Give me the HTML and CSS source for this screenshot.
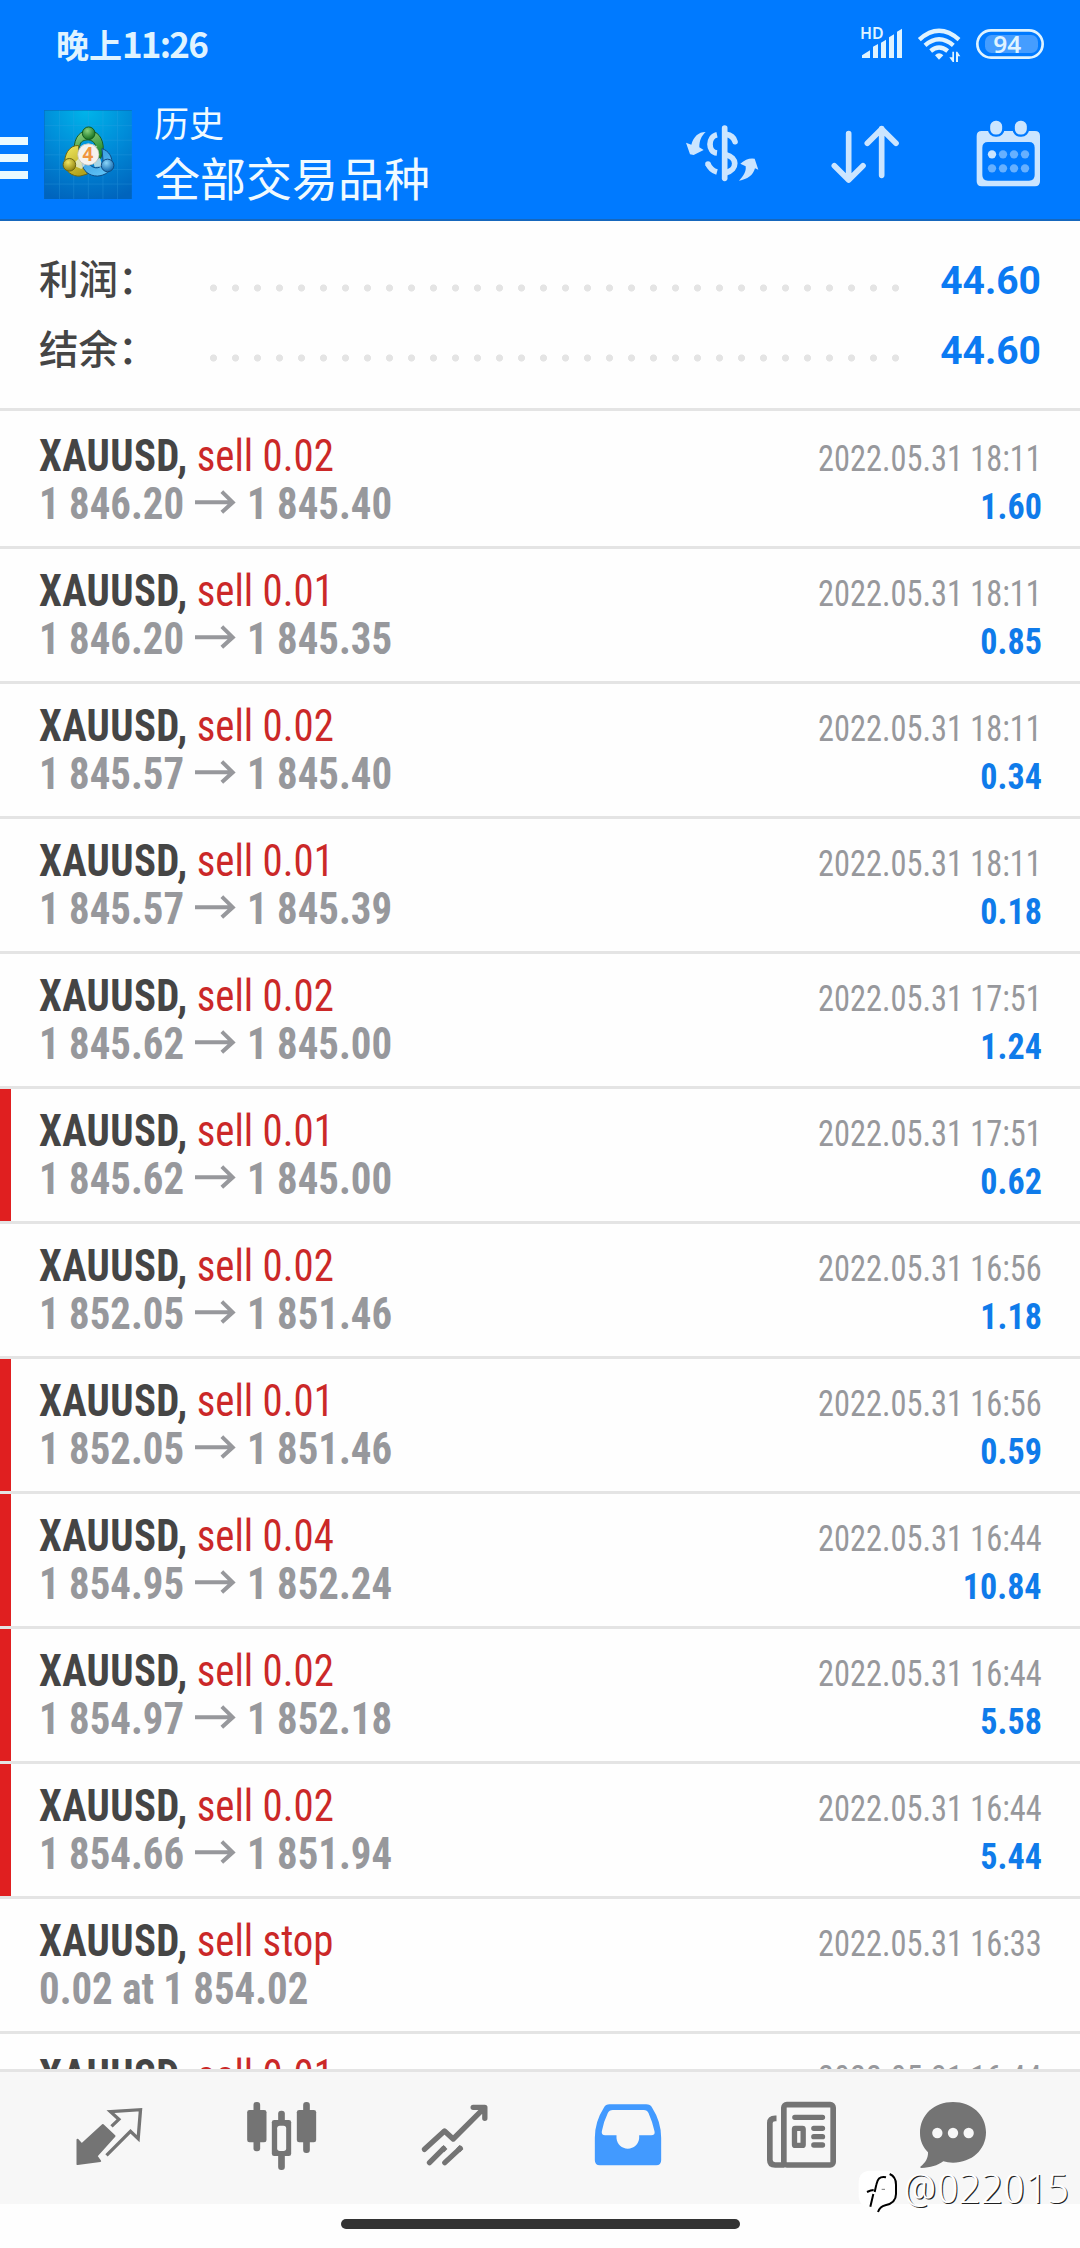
FILE: index.html
```html
<!DOCTYPE html>
<html lang="zh-CN">
<head>
<meta charset="utf-8">
<title>历史</title>
<link rel="stylesheet" href="styles.css">
</head>
<body>
<div class="screen">
  <header class="header">
    <div class="status">
      <div class="clock">晚上<span class="clock-digits">11:26</span></div>
      <svg class="status-icons" viewBox="660 78 555 114" fill="#dff3ff">
        <text x="660" y="117" font-family="Noto Sans" font-weight="600" font-size="46" textLength="71" lengthAdjust="spacingAndGlyphs">HD</text>
        <path d="M666 174v-8l24-15v23zM699 174v-34l15-8v42zM723 174v-46l15-9v55zM747 174v-62l15-9v71zM771 174v-79l15-9v88z"/>
        <g fill="none" stroke="#dff3ff" stroke-width="13">
          <path d="M838 119Q897 66 957 119"/><path d="M855 136Q897 99 940 136"/><path d="M872 153Q897 132 923 153"/>
        </g>
        <path d="M885 166q12-13 25 0l-13 13z"/>
        <path d="M937 155h5v31h-4l-10-14h9zM948 155h4l9 14h-7v17h-6z"/>
        <rect x="1035" y="105" width="159" height="54" rx="20" fill="#459dff"/>
        <rect x="1012" y="91" width="196" height="82" rx="41" fill="none" stroke="#dff3ff" stroke-width="8"/>
        <text x="1060" y="158" font-family="Noto Sans" font-weight="600" font-size="68" textLength="84" lengthAdjust="spacingAndGlyphs">94</text>
      </svg>
    </div>
    <div class="toolbar">
      <div class="menu"><i></i><i></i><i></i></div>
      <svg class="logo" viewBox="42 30 264 268">
        <defs>
          <radialGradient id="sky" cx=".48" cy="0" r="1.05"><stop offset="0" stop-color="#00b5ea"/><stop offset=".5" stop-color="#008bd8"/><stop offset="1" stop-color="#0064bd"/></radialGradient>
          <linearGradient id="green" x2=".4" y2="1"><stop offset="0" stop-color="#9ed98a"/><stop offset="1" stop-color="#1f8a2c"/></linearGradient>
          <linearGradient id="yellow" x2=".5" y2="1"><stop offset="0" stop-color="#f3ea62"/><stop offset="1" stop-color="#b3a41e"/></linearGradient>
          <linearGradient id="blue" x2=".5" y2="1"><stop offset="0" stop-color="#2b8ed6"/><stop offset="1" stop-color="#5cc0f5"/></linearGradient>
          <radialGradient id="gball" cx=".4" cy=".3" r=".7"><stop offset="0" stop-color="#8ad37e"/><stop offset="1" stop-color="#14701f"/></radialGradient>
          <radialGradient id="yball" cx=".4" cy=".3" r=".7"><stop offset="0" stop-color="#f0e560"/><stop offset="1" stop-color="#8f8212"/></radialGradient>
          <radialGradient id="bball" cx=".4" cy=".3" r=".7"><stop offset="0" stop-color="#8bd6fa"/><stop offset="1" stop-color="#1268ae"/></radialGradient>
        </defs>
        <rect x="42" y="30" width="264" height="268" fill="url(#sky)"/>
        <path d="M88 30v268M131 30v268M175 30v268M219 30v268M263 30v268M42 77h264M42 121h264M42 165h264M42 209h264M42 253h264" stroke="#3aa6e6" stroke-width="2" opacity=".4"/>
        <path d="M42 298V31h264" fill="none" stroke="#0a63b4" stroke-width="2"/>
        <path d="M132 150c0-40 20-58 44-58s46 20 44 60l-8 24-16-6c10-30-4-50-22-50s-26 10-24 20z" fill="url(#green)" stroke="#1a5c26" stroke-width="3"/>
        <path d="M146 137c-30-2-44 30-42 54 0 24 24 40 46 38l22-6-26-62z" fill="url(#yellow)" stroke="#6b6512" stroke-width="3"/>
        <path d="M216 146c22 8 32 26 30 48 0 20-22 34-44 35-24 0-44-16-46-38l24 4c12 14 34 12 40-6z" fill="url(#blue)" stroke="#104c84" stroke-width="3"/>
        <path d="M150 140q24-18 52 0l-26 20zM134 188l14-14 18 20-12 14-22-10zM190 188l20-14 8 26-24 2z" fill="#e9f6ee" opacity=".7"/>
        <circle cx="176" cy="100" r="19" fill="url(#gball)" stroke="#145a1e" stroke-width="3"/>
        <circle cx="118" cy="195" r="19" fill="url(#yball)" stroke="#6b6512" stroke-width="3"/>
        <circle cx="233" cy="197" r="19" fill="url(#bball)" stroke="#104c84" stroke-width="3"/>
        <circle cx="175" cy="164" r="32" fill="#f5f2ee" stroke="#b9b9ae" stroke-width="2"/>
        <text x="174" y="184" text-anchor="middle" font-family="Noto Sans" font-weight="700" font-size="57" fill="#f0953f">4</text>
      </svg>
      <div class="titles">
        <div class="title-small">历史</div>
        <div class="title-large">全部交易品种</div>
      </div>
      <div class="actions">
        <svg class="act-currency" viewBox="132 360 228 204" fill="#cbe5ff">
          <path d="M197 396c-22 0-36 14-43 38l-16-6 12 35 11 2 30-15-13-8c0-20 6-34 19-46z"/>
          <path d="M297 542c26-4 42-16 48-37l10 4-11-33q-22-4-43 15l16 8c2 16-6 28-20 43z"/>
          <path d="M254 384v151" stroke="#cbe5ff" stroke-width="17" stroke-linecap="round"/>
          <g fill="none" stroke="#cbe5ff" stroke-width="17">
            <path d="M231 404c-28 6-28 52 0 55"/><path d="M231 516q-19-5-27-24"/><path d="M204 492v.1" stroke-linecap="round"/>
            <path d="M258 403c16 2 24 10 27 22" stroke-linecap="round"/>
            <path d="M258 464c34 8 36 44 0 54"/>
          </g>
        </svg>
        <svg class="act-sort" viewBox="570 360 210 204" fill="none" stroke="#cbe5ff" stroke-width="17" stroke-linecap="round" stroke-linejoin="round">
          <path d="M626 401v138M583 497l43 43 43-43M725 526V386M682 430l43-43 43 43"/>
        </svg>
        <svg class="act-calendar" viewBox="1005 360 201 204">
          <path fill="#cbe5ff" fill-rule="evenodd" d="M1025 393h160q15 0 15 15v136q0 15-15 15h-160q-15 0-15-15V408q0-15 15-15zM1044 426q-17 0-17 17v82q0 17 17 17h123q17 0 17-17v-82q0-17-17-17z"/>
          <rect x="1047" y="359" width="43" height="48" rx="20" fill="#cbe5ff" stroke="#007aff" stroke-width="7"/>
          <rect x="1121" y="359" width="43" height="48" rx="20" fill="#cbe5ff" stroke="#007aff" stroke-width="7"/>
          <g fill="#66b0ff">
            <circle cx="1056" cy="463" r="12.500" fill="#cbe5ff"/><circle cx="1089" cy="463" r="12.500"/><circle cx="1122" cy="463" r="12.500"/><circle cx="1155" cy="463" r="12.500"/>
            <circle cx="1056" cy="505" r="12.500"/><circle cx="1089" cy="505" r="12.500"/><circle cx="1122" cy="505" r="12.500"/><circle cx="1155" cy="505" r="12.500"/>
          </g>
        </svg>
      </div>
    </div>
  </header>

  <section class="summary">
    <div class="sum-row"><span class="sum-label">利润：</span><span class="dots"></span><span class="sum-value">44.60</span></div>
    <div class="sum-row"><span class="sum-label">结余：</span><span class="dots"></span><span class="sum-value">44.60</span></div>
  </section>

  <svg class="defs" width="0" height="0"><symbol id="arrow" viewBox="0 0 126 72" preserveAspectRatio="none"><path d="M0 37h112M81 5l33 32-33 30" fill="none" stroke="#97989c" stroke-width="12"/></symbol></svg>

  <main class="list">
    <div class="deal">
      <div class="line"><div class="left"><b class="sym">XAUUSD,</b><span class="side">sell 0.02</span></div><span class="time">2022.05.31 18:11</span></div>
      <div class="line"><div class="left price"><b>1 846.20</b><svg class="arrow"><use href="#arrow"/></svg><b>1 845.40</b></div><b class="profit">1.60</b></div>
    </div>
    <div class="deal">
      <div class="line"><div class="left"><b class="sym">XAUUSD,</b><span class="side">sell 0.01</span></div><span class="time">2022.05.31 18:11</span></div>
      <div class="line"><div class="left price"><b>1 846.20</b><svg class="arrow"><use href="#arrow"/></svg><b>1 845.35</b></div><b class="profit">0.85</b></div>
    </div>
    <div class="deal">
      <div class="line"><div class="left"><b class="sym">XAUUSD,</b><span class="side">sell 0.02</span></div><span class="time">2022.05.31 18:11</span></div>
      <div class="line"><div class="left price"><b>1 845.57</b><svg class="arrow"><use href="#arrow"/></svg><b>1 845.40</b></div><b class="profit">0.34</b></div>
    </div>
    <div class="deal">
      <div class="line"><div class="left"><b class="sym">XAUUSD,</b><span class="side">sell 0.01</span></div><span class="time">2022.05.31 18:11</span></div>
      <div class="line"><div class="left price"><b>1 845.57</b><svg class="arrow"><use href="#arrow"/></svg><b>1 845.39</b></div><b class="profit">0.18</b></div>
    </div>
    <div class="deal">
      <div class="line"><div class="left"><b class="sym">XAUUSD,</b><span class="side">sell 0.02</span></div><span class="time">2022.05.31 17:51</span></div>
      <div class="line"><div class="left price"><b>1 845.62</b><svg class="arrow"><use href="#arrow"/></svg><b>1 845.00</b></div><b class="profit">1.24</b></div>
    </div>
    <div class="deal marked">
      <div class="line"><div class="left"><b class="sym">XAUUSD,</b><span class="side">sell 0.01</span></div><span class="time">2022.05.31 17:51</span></div>
      <div class="line"><div class="left price"><b>1 845.62</b><svg class="arrow"><use href="#arrow"/></svg><b>1 845.00</b></div><b class="profit">0.62</b></div>
    </div>
    <div class="deal">
      <div class="line"><div class="left"><b class="sym">XAUUSD,</b><span class="side">sell 0.02</span></div><span class="time">2022.05.31 16:56</span></div>
      <div class="line"><div class="left price"><b>1 852.05</b><svg class="arrow"><use href="#arrow"/></svg><b>1 851.46</b></div><b class="profit">1.18</b></div>
    </div>
    <div class="deal marked">
      <div class="line"><div class="left"><b class="sym">XAUUSD,</b><span class="side">sell 0.01</span></div><span class="time">2022.05.31 16:56</span></div>
      <div class="line"><div class="left price"><b>1 852.05</b><svg class="arrow"><use href="#arrow"/></svg><b>1 851.46</b></div><b class="profit">0.59</b></div>
    </div>
    <div class="deal marked">
      <div class="line"><div class="left"><b class="sym">XAUUSD,</b><span class="side">sell 0.04</span></div><span class="time">2022.05.31 16:44</span></div>
      <div class="line"><div class="left price"><b>1 854.95</b><svg class="arrow"><use href="#arrow"/></svg><b>1 852.24</b></div><b class="profit">10.84</b></div>
    </div>
    <div class="deal marked">
      <div class="line"><div class="left"><b class="sym">XAUUSD,</b><span class="side">sell 0.02</span></div><span class="time">2022.05.31 16:44</span></div>
      <div class="line"><div class="left price"><b>1 854.97</b><svg class="arrow"><use href="#arrow"/></svg><b>1 852.18</b></div><b class="profit">5.58</b></div>
    </div>
    <div class="deal marked">
      <div class="line"><div class="left"><b class="sym">XAUUSD,</b><span class="side">sell 0.02</span></div><span class="time">2022.05.31 16:44</span></div>
      <div class="line"><div class="left price"><b>1 854.66</b><svg class="arrow"><use href="#arrow"/></svg><b>1 851.94</b></div><b class="profit">5.44</b></div>
    </div>
    <div class="deal">
      <div class="line"><div class="left"><b class="sym">XAUUSD,</b><span class="side">sell stop</span></div><span class="time">2022.05.31 16:33</span></div>
      <div class="line"><div class="left price"><b>0.02 at 1 854.02</b></div></div>
    </div>
    <div class="deal">
      <div class="line"><div class="left"><b class="sym">XAUUSD,</b><span class="side">sell 0.01</span></div><span class="time">2022.05.31 16:44</span></div>
    </div>
  </main>

  <nav class="tabs">
    <svg viewBox="214.500 660 222 222">
      <path fill="#747474" stroke="#747474" stroke-width="6" stroke-linejoin="round" d="M307 735l35 33-54 60 11 15-68 9V779l13 14z"/>
      <path fill="none" stroke="#747474" stroke-width="10" d="M333 739l22-21-25-23 90-6-7 87-23-22-72 72"/>
    </svg>
    <svg viewBox="733.500 660 222 222" fill="#747474">
      <rect x="759" y="666" width="20" height="148" rx="9"/><rect x="740" y="690" width="58" height="97" rx="7"/>
      <rect x="908" y="666" width="20" height="153" rx="9"/><rect x="889" y="690" width="58" height="97" rx="7"/>
      <rect x="833" y="692" width="20" height="178" rx="9"/><rect x="814" y="720" width="58" height="108" rx="7"/>
      <rect x="830" y="737" width="27" height="76" rx="8" fill="#f7f7f7"/>
    </svg>
    <svg viewBox="112.500 180 222 222" fill="none" stroke="#747474" stroke-width="16" stroke-linecap="round" stroke-linejoin="round">
      <path d="M132 328l60-55 26 24 92-92M278 202h35v33M147 368l42-42M193 368l46-43"/>
      <path d="M185 331l10-10M233 331l10-10" stroke-linecap="butt"/>
    </svg>
    <svg viewBox="631.500 180 222 222">
      <path fill="#429aff" fill-rule="evenodd" d="M687 193h110q12 0 18 10 27 42 27 90v68q0 15-15 15H658q-15 0-15-15v-68q0-48 27-90 6-10 17-10zM697 210q-11 0-15 9-12 24-18 55-2 12 10 12h34v9c2 18 16 31 34 31s32-13 34-31v-9h36q13 0 10-12-7-31-18-55-4-9-14-9z"/>
    </svg>
    <svg viewBox="130.500 180 222 222" fill="none" stroke="#747474" stroke-width="17">
      <rect x="190" y="194" width="148" height="181" rx="9"/>
      <path d="M168 235h-4q-16 0-16 14v111q0 15 16 15h28"/>
      <path d="M223 232h83M280 265h26M280 290h26M280 315h26" stroke-width="16" stroke-linecap="round"/>
      <rect x="222" y="265" width="26" height="51" rx="2" stroke-width="16"/>
    </svg>
    <svg viewBox="588 180 222 222">
      <path fill="#747474" d="M699 186c56 0 99 38 99 91s-43 91-99 91q-16 0-29-4c-18 13-38 19-66 20q-5-1-3-4c15-11 24-26 23-43-15-16-24-34-24-58 0-55 43-93 99-93z"/>
      <g fill="#f7f7f7"><circle cx="652" cy="279" r="15.500"/><circle cx="699" cy="279" r="15.500"/><circle cx="746" cy="279" r="15.500"/></g>
    </svg>
  </nav>
  <footer class="gesture"><div class="pill"></div></footer>

  <svg class="watermark" viewBox="411 384 645 138">
    <path fill="#fff" d="M450 392h52q28 3 28 34v32q0 30-28 38-20 3-27 20-6-12-25-14-34-2-34-38v-36q0-34 34-36z"/>
    <path fill="none" stroke="#000" stroke-width="6" d="M509 402q19 8 19 32v28c0 22-14 30-32 34q-16 4-22 20M498 412c-20-4-26 6-29 22l-5 22M460 462l-9 38M441 456q12-6 20-6"/>
    <path d="M485 448h10" stroke="#777" stroke-width="3"/>
    <g font-family="Open Sans" font-weight="300" font-size="124">
      <text x="552.500" y="493" fill="#222" textLength="498" lengthAdjust="spacingAndGlyphs">@022015</text>
      <text x="549" y="490" fill="#fff" textLength="498" lengthAdjust="spacingAndGlyphs">@022015</text>
    </g>
  </svg>
</div>
</body>
</html>
```
FILE: styles.css
```css
* { box-sizing: border-box; }
body { margin: 0; background: #fff; }
svg { display: block; flex: none; }
.defs { position: absolute; }

.screen {
  position: relative;
  display: flex;
  flex-direction: column;
  width: 1080px;
  height: 2248px;
  overflow: hidden;
  background: #fefefe;
  font-family: "Roboto Condensed", Roboto, "Noto Sans CJK SC", sans-serif;
  font-stretch: 75%;
}

/* Header */
.header {
  flex: none;
  height: 221px;
  background: #007aff;
  border-bottom: 2px solid #1667bd;
  color: #f0faff;
  font-family: "Noto Sans CJK SC", sans-serif;
  font-stretch: normal;
}
.status {
  display: flex;
  justify-content: space-between;
  height: 92px;
  padding: 26px 35px 0 56px;
}
.clock {
  height: 38px;
  line-height: 33px;
  font-size: 33px;
  font-weight: 700;
  color: #dff3ff;
  white-space: nowrap;
}
.clock-digits { font-size: 35px; letter-spacing: -1.800px; }
.status-icons { width: 185px; height: 38px; overflow: visible; }

.toolbar { display: flex; align-items: flex-start; }
.menu {
  display: flex;
  flex-direction: column;
  gap: 9px;
  width: 28px;
  margin-top: 45px;
}
.menu i { height: 8px; background: #eafaff; }
.logo { width: 88px; height: 89px; margin: 18px 22px 0 16px; }
.titles { padding-top: 8px; white-space: nowrap; }
.title-small { font-size: 35px; line-height: 44px; }
.title-large { font-size: 46px; line-height: 64px; }
.actions { display: flex; margin: 28px 38px 0 auto; }
.act-currency { width: 76px; height: 68px; }
.act-sort { width: 70px; height: 68px; margin: 0 75px 0 70px; }
.act-calendar { width: 67px; height: 68px; }

/* Totals */
.summary {
  flex: none;
  height: 190px;
  padding: 24px 39px 0 39px;
  border-bottom: 3px solid #e4e4e4;
}
.sum-row { display: flex; align-items: center; height: 70px; }
.sum-label {
  width: 171px;
  margin-bottom: 6px;
  font: 500 39.500px/66px "Noto Sans CJK SC", sans-serif;
  color: #454545;
}
.dots {
  width: 704px;
  height: 8px;
  margin-top: 15px;
  background: radial-gradient(circle at 3.500px 4px, #e4e4e4 3.200px, transparent 3.900px) 0 0 / 22px 8px repeat-x;
}
.sum-value {
  margin-left: auto;
  padding-top: 2px;
  font: 700 39px/68px Roboto, sans-serif;
  color: #0b7af2;
}

/* Deals: the row texts are narrowed horizontally, each from its own edge */
.list { flex: none; height: 1658px; padding-top: 3px; overflow: hidden; }
.deal {
  height: 135px;
  padding: 18px 38px 0 39px;
  border-bottom: 3px solid #e4e4e4;
}
.marked { background: linear-gradient(#e01f20, #e01f20) 0 0 / 11px 100% no-repeat; background-clip: padding-box; }
.line {
  display: flex;
  align-items: baseline;
  justify-content: space-between;
  height: 48px;
  font-size: 45px;
  line-height: 48px;
  white-space: nowrap;
}
.left { display: flex; align-items: baseline; transform: scaleX(.907); transform-origin: 0 0; }
.sym { margin-right: 10px; letter-spacing: .400px; color: #454545; }
.side { color: #cb2828; }
.price { color: #97989c; }
.arrow { width: 46px; height: 24px; margin: 0 11px 4px 12.500px; align-self: center; }
.time { font-size: 37px; color: #97989c; transform: scaleX(.875); transform-origin: 100% 0; }
.profit { font-size: 37px; color: #0f7bea; transform: scaleX(.92); transform-origin: 100% 0; }

/* Bottom bar */
.tabs {
  flex: none;
  display: grid;
  grid-template-columns: repeat(5, 173px) 132px;
  justify-items: center;
  height: 135px;
  padding: 28px 0 0 22px;
  background: #f7f7f7;
  border-top: 3px solid #e4e4e4;
}
.tabs svg { width: 74px; height: 74px; }
.gesture { height: 44px; padding-top: 15px; background: #fefefe; }
.pill { width: 399px; height: 10px; margin: 0 auto; border-radius: 5px; background: #333; }

.watermark { position: absolute; left: 857px; top: 2168px; width: 215px; height: 46px; overflow: visible; }
```
